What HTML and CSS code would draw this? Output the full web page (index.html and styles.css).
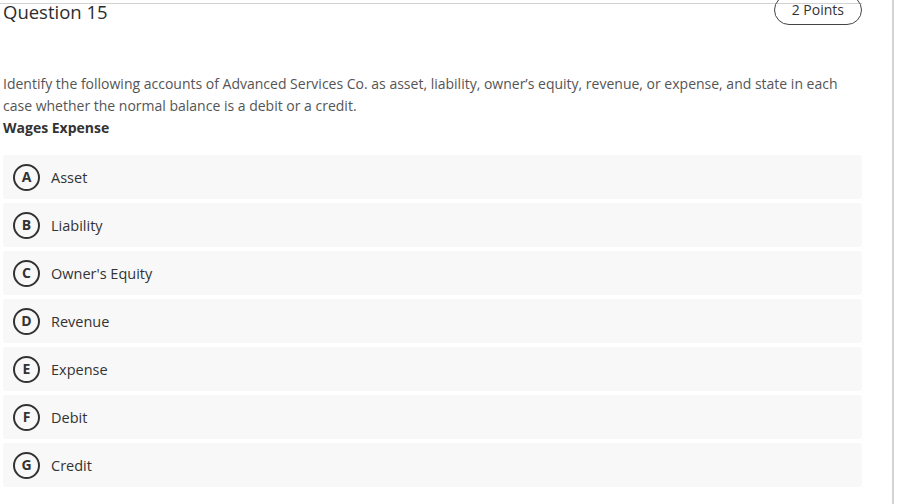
FILE: index.html
```html
<!DOCTYPE html>
<html lang="en">
	<head>
		<meta charset="utf-8">
		<title>Question 15</title>
		<link rel="stylesheet" href="styles.css">
	</head>
	<body>
		<div class="page">
			<div class="question">
				<div class="question-head">
					<h2 class="question-title">Question 15</h2>
					<span class="points">2 Points</span>
				</div>

				<div class="prompt">
					<p>Identify the following accounts of Advanced Services Co. as asset, liability, owner’s equity, revenue, or expense, and state in each case whether the normal balance is a debit or a credit.</p>
					<p class="prompt-item">Wages Expense</p>
				</div>

				<ul class="options">
					<li class="option"><span class="letter">A</span>Asset</li>
					<li class="option"><span class="letter">B</span>Liability</li>
					<li class="option"><span class="letter">C</span>Owner's Equity</li>
					<li class="option"><span class="letter">D</span>Revenue</li>
					<li class="option"><span class="letter">E</span>Expense</li>
					<li class="option"><span class="letter">F</span>Debit</li>
					<li class="option"><span class="letter">G</span>Credit</li>
				</ul>
			</div>
		</div>
	</body>
</html>
```

FILE: styles.css
```css
/* Base */
* {
	padding: 0;
	margin: 0;
	box-sizing: border-box;
}

body {
	font-family: 'Open Sans', 'Noto Sans', Arial, sans-serif;
	color: #333;
	background: #fff;
	overflow: hidden;
}

/* Page frame with the scroll edge on the right */
.page {
	width: 894px;
	height: 504px;
	border-right: 2px solid #d4d4d4;
}

.question {
	width: 862px;
	padding-top: 3px;
}

/* Header: title and points pill */
.question-head {
	display: flex;
	justify-content: space-between;
	align-items: flex-start;
	border-top: 1px solid #d2d2d2;
	height: 21px;
}

.question-title {
	margin-left: 3px;
	font-size: 18.5px;
	font-weight: 400;
	line-height: 16px;
	color: #2d2d2d;
}

.points {
	/* pill pokes above the top edge */
	margin-top: -9px;
	height: 30px;
	padding: 0 17px;
	border: 1px solid #444;
	border-radius: 15px;
	font-size: 14px;
	line-height: 28px;
	color: #333;
}

/* Question text */
.prompt {
	margin-top: 49px;
	padding-left: 3px;
	font-size: 14px;
	line-height: 22px;
	color: #555;
}

.prompt-item {
	font-weight: 700;
	color: #333;
}

/* Answer choices */
.options {
	list-style: none;
	margin-top: 16px;
	margin-left: 3px;
	display: flex;
	flex-direction: column;
	gap: 4px;
}

.option {
	display: flex;
	align-items: center;
	height: 44px;
	padding-left: 10px;
	background: #f8f8f8;
	border-radius: 3px;
	font-size: 14.5px;
	color: #333;
}

.letter {
	display: flex;
	align-items: center;
	justify-content: center;
	width: 27px;
	height: 27px;
	margin-right: 11px;
	border: 2px solid #333;
	border-radius: 50%;
	font-size: 14px;
	font-weight: 700;
	line-height: 1;
}
```
